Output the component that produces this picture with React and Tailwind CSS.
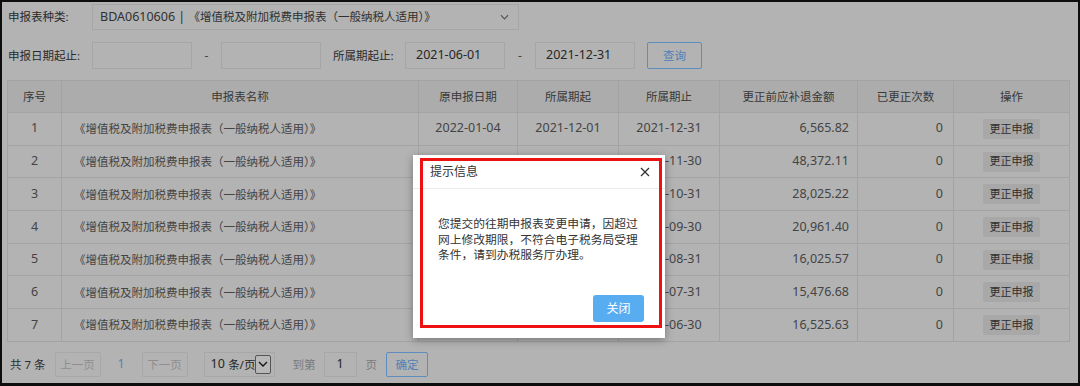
import React from 'react';

// rows 2-7 have their first dates hidden under the dialog
const rows = [
  ['1', '2022-01-04', '2021-12-01', '2021-12-31', '6,565.82'],
  ['2', '', '', '2021-11-30', '48,372.11'],
  ['3', '', '', '2021-10-31', '28,025.22'],
  ['4', '', '', '2021-09-30', '20,961.40'],
  ['5', '', '', '2021-08-31', '16,025.57'],
  ['6', '', '', '2021-07-31', '15,476.68'],
  ['7', '', '', '2021-06-30', '16,525.63'],
];

const name = '《增值税及附加税费申报表（一般纳税人适用）》';

function Chevron({ className }) {
  return (
    <svg viewBox="0 0 10 6" className={className} fill="none" stroke="currentColor" strokeWidth="1.3">
      <path d="M1 1l4 4 4-4" />
    </svg>
  );
}

function Input({ value, w }) {
  return (
    <div className={`h-[27px] ${w} border border-[#a6a6a6] flex items-center pl-[10px] text-[12.5px] text-[#262626]`}>
      {value}
    </div>
  );
}

export default function App() {
  return (
    <div
      className="relative w-[1080px] h-[386px] overflow-hidden bg-[#b3b3b3] border-2 border-b-[3px] border-[#0d0d0d] px-[5px]"
      style={{ fontFamily: "'Noto Sans', 'Noto Sans CJK SC', sans-serif" }}
    >
      {/* row 1 */}
      <div className="flex items-center mt-[2px] h-[26px]">
        <div className="w-[85px] pl-[1px] text-[11.5px] text-[#2a2a2a]">申报表种类:</div>
        <div className="w-[427px] h-[26px] border border-[#a6a6a6] flex items-center pl-[7px] pr-[9px] text-[#303030] whitespace-nowrap">
          <span className="text-[12.5px]">BDA0610606 |&nbsp;</span>
          <span className="text-[11.5px]">{name}</span>
          <Chevron className="ml-auto w-[9px] h-[6px] text-[#555]" />
        </div>
      </div>

      {/* row 2 */}
      <div className="flex items-center mt-[12px] h-[27px]">
        <div className="w-[85px] pl-[1px] text-[11.5px] text-[#2a2a2a]">申报日期起止:</div>
        <Input value="" w="w-[100px]" />
        <div className="w-[29px] text-center text-[12px] text-[#444]">-</div>
        <Input value="" w="w-[100px]" />
        <div className="ml-[12px] w-[72px] text-[11.5px] text-[#2a2a2a]">所属期起止:</div>
        <Input value="2021-06-01" w="w-[100px]" />
        <div className="w-[30px] text-center text-[12px] text-[#444]">-</div>
        <Input value="2021-12-31" w="w-[100px]" />
        <div className="ml-[12px] w-[55px] h-[27px] border border-[#5d8dbf] rounded-[2px] flex items-center justify-center text-[11.5px] text-[#4f82b8]">
          查询
        </div>
      </div>

      {/* table */}
      <table className="mt-[11px] table-fixed border-collapse text-[11.5px] text-[#444]">
        <colgroup>
          <col className="w-[54px]" />
          <col className="w-[357px]" />
          <col className="w-[99px]" />
          <col className="w-[101px]" />
          <col className="w-[101px]" />
          <col className="w-[138px]" />
          <col className="w-[96px]" />
          <col className="w-[116px]" />
        </colgroup>
        <thead>
          <tr className="h-[32px] bg-[#acacac] text-[#383838]">
            {['序号', '申报表名称', '原申报日期', '所属期起', '所属期止', '更正前应补退金额', '已更正次数', '操作'].map((h) => (
              <th key={h} className="border border-[#a3a3a3] font-normal text-center p-0">
                {h}
              </th>
            ))}
          </tr>
        </thead>
        <tbody>
          {rows.map((r) => (
            <tr key={r[0]} className="h-[32.7px]">
              <td className="border border-[#a3a3a3] text-center text-[12.5px] p-0">{r[0]}</td>
              <td className="border border-[#a3a3a3] pl-[12px] p-0">{name}</td>
              <td className="border border-[#a3a3a3] text-center text-[12.5px] p-0">{r[1]}</td>
              <td className="border border-[#a3a3a3] text-center text-[12.5px] p-0">{r[2]}</td>
              <td className="border border-[#a3a3a3] text-center text-[12.5px] p-0">{r[3]}</td>
              <td className="border border-[#a3a3a3] text-right pr-[8px] text-[12.5px]">{r[4]}</td>
              <td className="border border-[#a3a3a3] text-right pr-[10px] text-[12.5px]">0</td>
              <td className="border border-[#a3a3a3] p-0">
                <div className="mx-auto w-[57px] h-[20px] rounded-[2px] bg-[#a8a8a8] flex items-center justify-center text-[11px] text-[#2e2e2e]">
                  更正申报
                </div>
              </td>
            </tr>
          ))}
        </tbody>
      </table>

      {/* pagination */}
      <div className="flex items-center mt-[10px] h-[25px] text-[11.5px] whitespace-nowrap">
        <span className="ml-[3px] text-[#2e2e2e]">共 7 条</span>
        <div className="ml-[9px] w-[46px] h-[25px] border border-[#a8a8a8] rounded-[2px] flex items-center justify-center text-[#8e8e8e]">
          上一页
        </div>
        <span className="w-[41px] text-center text-[12.5px] text-[#5181b3]">1</span>
        <div className="w-[46px] h-[25px] border border-[#a8a8a8] rounded-[2px] flex items-center justify-center text-[#8e8e8e]">
          下一页
        </div>
        <div className="ml-[16px] w-[71px] h-[25px] border border-[#a8a8a8] flex items-center pl-[6px] pr-[3px] text-[#262626]">
          <span className="text-[12.5px]">10&nbsp;</span>
          <span>条/页</span>
          <div className="ml-auto w-[16px] h-[19px] border border-[#555] rounded-[2px] bg-[#b8b8b8] flex items-center justify-center">
            <Chevron className="w-[10px] h-[6px] text-[#111]" />
          </div>
        </div>
        <span className="ml-[18px] text-[#7a7a7a]">到第</span>
        <div className="ml-[8px] w-[33px] h-[25px] border border-[#a8a8a8] flex items-center justify-center text-[12.5px] text-[#262626]">
          1
        </div>
        <span className="ml-[9px] text-[#7a7a7a]">页</span>
        <div className="ml-[9px] w-[42px] h-[25px] border border-[#5d8dbf] rounded-[2px] flex items-center justify-center text-[#4f82b8]">
          确定
        </div>
      </div>

      {/* modal */}
      <div className="absolute left-[411px] top-[153px] w-[252px] h-[183px] bg-white shadow-[0_2px_8px_rgba(0,0,0,0.35)] text-[#333]">
        <div className="h-[34px] border-b border-[#ececec] flex items-center pl-[17px] pr-[15px] text-[12px]">
          <span>提示信息</span>
          <svg viewBox="0 0 10 10" className="ml-auto w-[10px] h-[10px]" stroke="#333" strokeWidth="1.3">
            <path d="M1 1l8 8M9 1l-8 8" />
          </svg>
        </div>
        <p className="ml-[25px] mt-[27px] w-[203px] text-[11.75px] leading-[15.5px]">
          您提交的往期申报表变更申请，因超过网上修改期限，不符合电子税务局受理条件，请到办税服务厅办理。
        </p>
        <div className="absolute right-[21px] top-[140px] w-[51px] h-[27px] rounded-[3px] bg-[#58adf1] flex items-center justify-center text-[12px] text-white">
          关闭
        </div>
      </div>

      {/* red highlight frame */}
      <div className="absolute left-[418px] top-[156px] w-[242px] h-[170px] border-[3px] border-[#ee1111]" />
    </div>
  );
}
